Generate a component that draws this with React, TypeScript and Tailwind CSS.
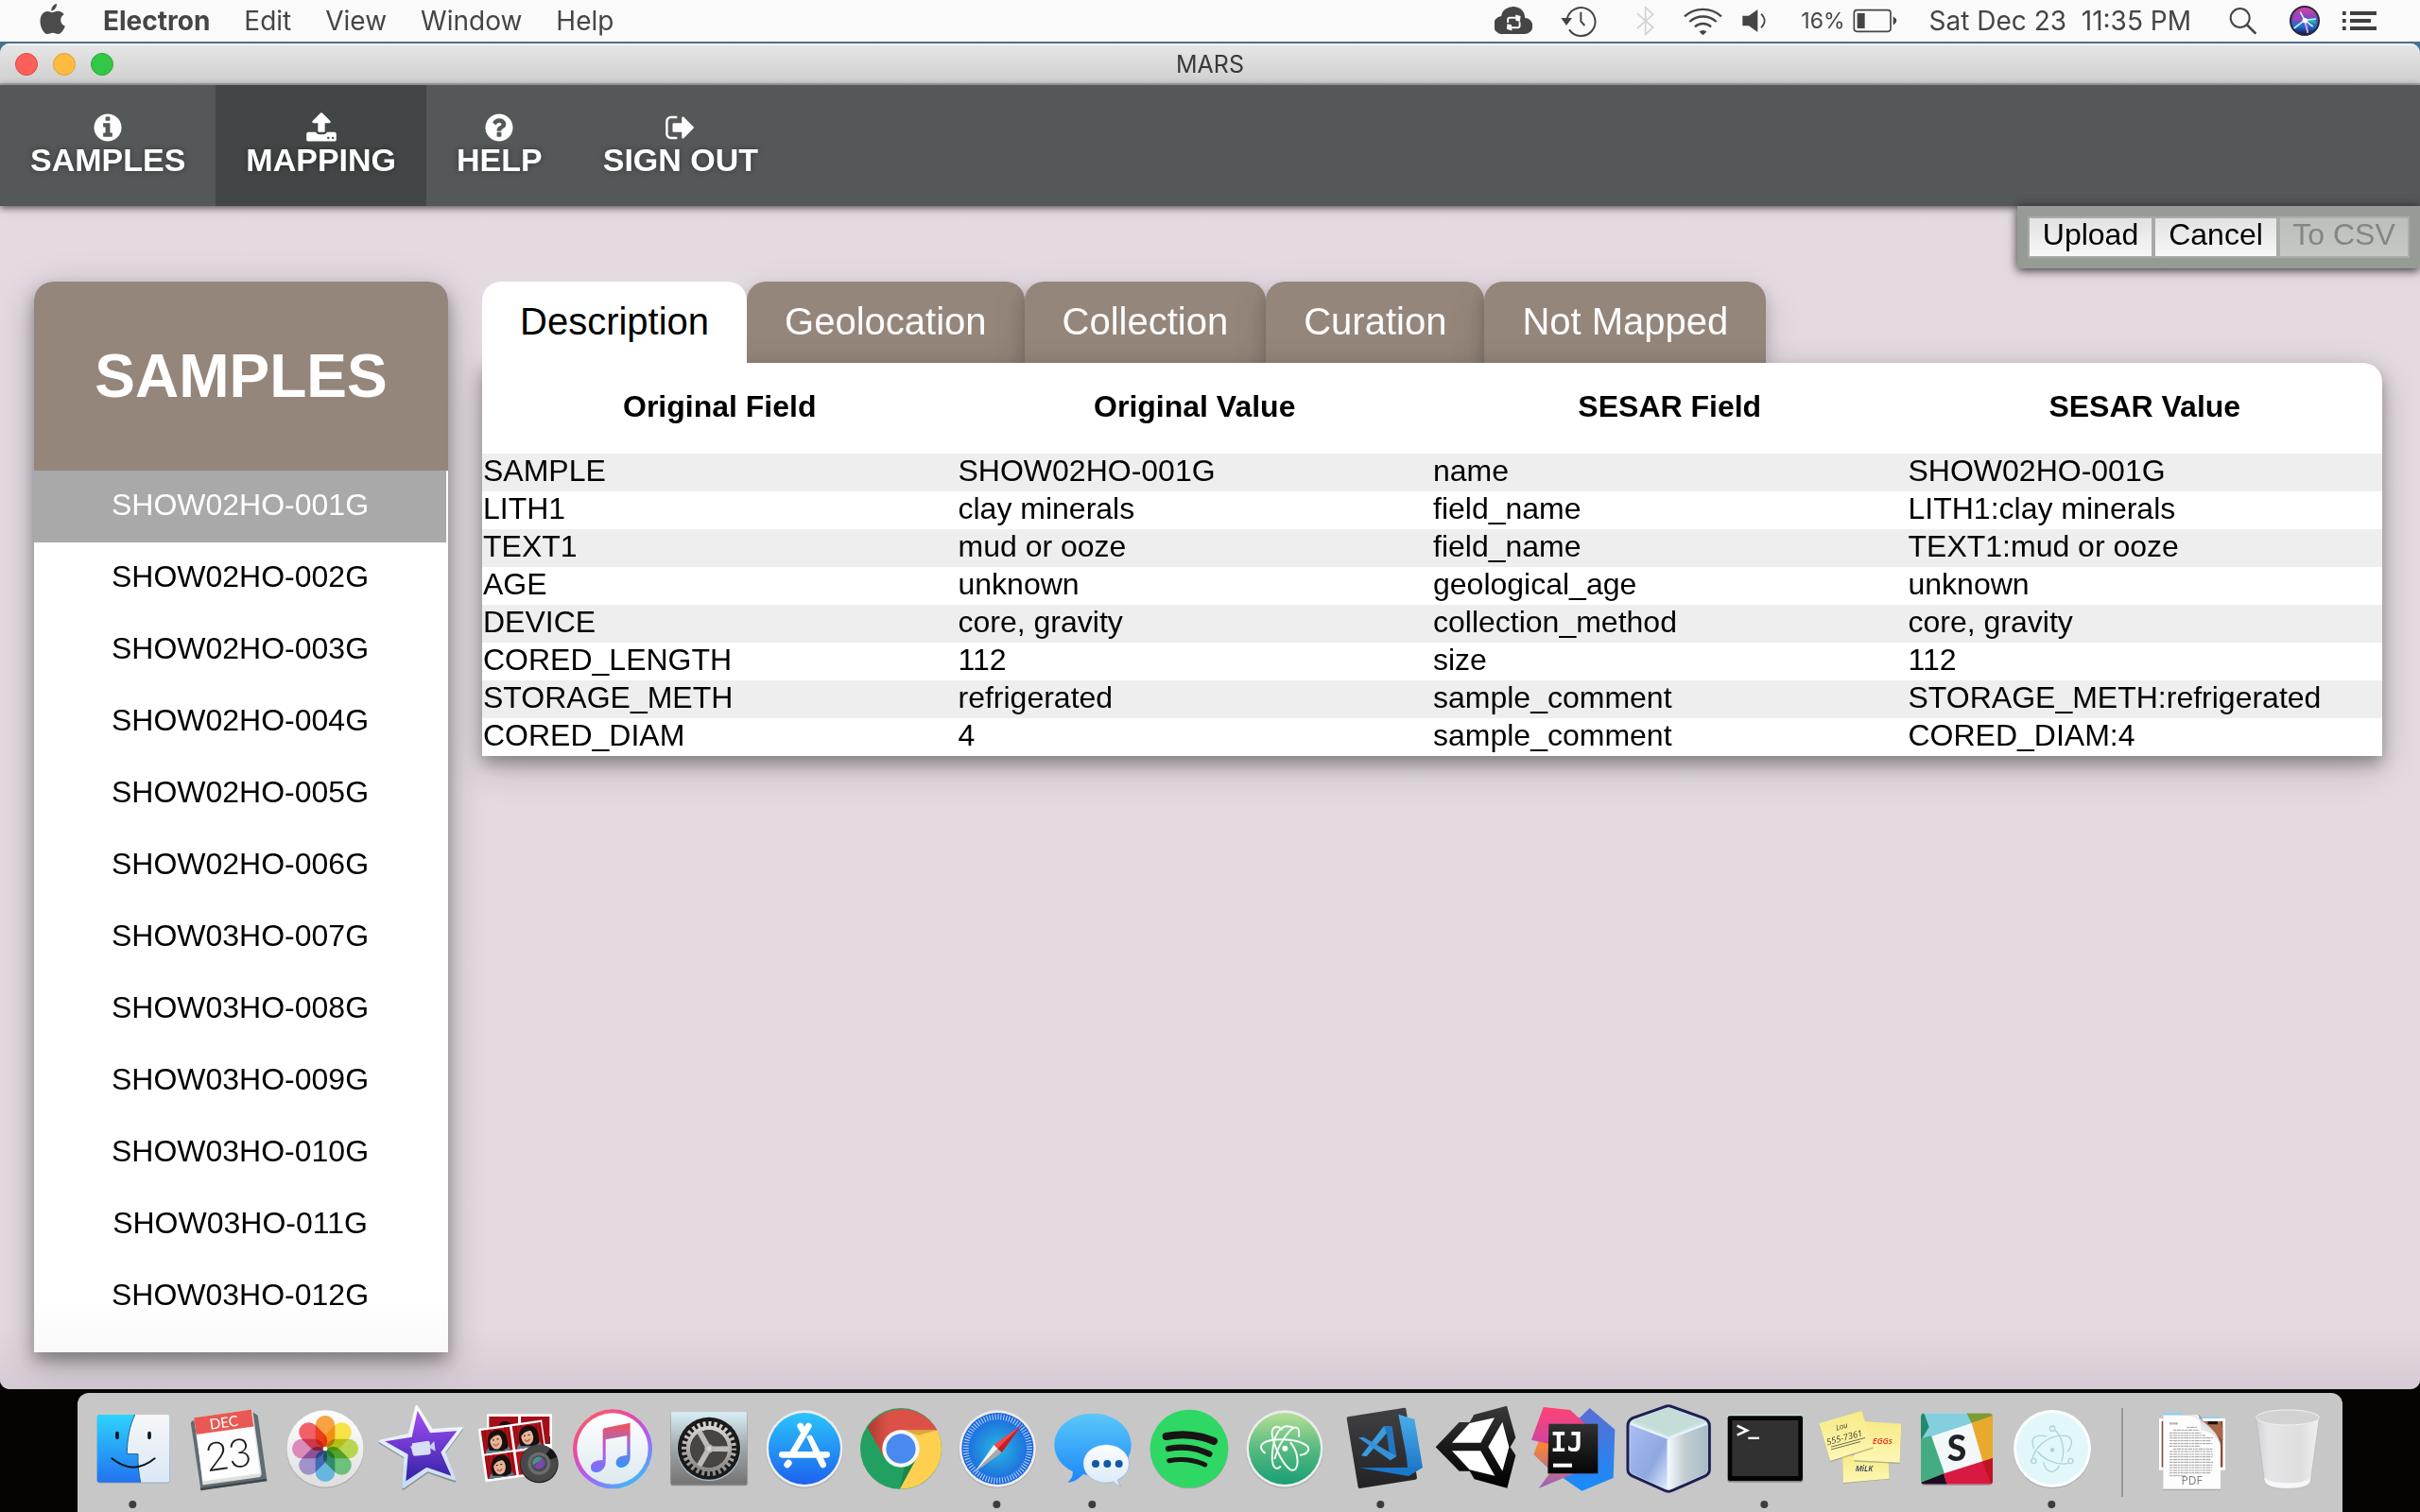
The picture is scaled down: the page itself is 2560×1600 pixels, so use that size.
import { useState, type ReactNode } from "react";

const samples = [
  "SHOW02HO-001G",
  "SHOW02HO-002G",
  "SHOW02HO-003G",
  "SHOW02HO-004G",
  "SHOW02HO-005G",
  "SHOW02HO-006G",
  "SHOW03HO-007G",
  "SHOW03HO-008G",
  "SHOW03HO-009G",
  "SHOW03HO-010G",
  "SHOW03HO-011G",
  "SHOW03HO-012G",
];

const tabs = ["Description", "Geolocation", "Collection", "Curation", "Not Mapped"];

const columns = ["Original Field", "Original Value", "SESAR Field", "SESAR Value"];

const rows = [
  ["SAMPLE", "SHOW02HO-001G", "name", "SHOW02HO-001G"],
  ["LITH1", "clay minerals", "field_name", "LITH1:clay minerals"],
  ["TEXT1", "mud or ooze", "field_name", "TEXT1:mud or ooze"],
  ["AGE", "unknown", "geological_age", "unknown"],
  ["DEVICE", "core, gravity", "collection_method", "core, gravity"],
  ["CORED_LENGTH", "112", "size", "112"],
  ["STORAGE_METH", "refrigerated", "sample_comment", "STORAGE_METH:refrigerated"],
  ["CORED_DIAM", "4", "sample_comment", "CORED_DIAM:4"],
];

const infoPath =
  "M1152 1376v-160q0-14-9-23t-23-9h-96V672q0-14-9-23t-23-9H672q-14 0-23 9t-9 23v160q0 14 9 23t23 9h96v320h-96q-14 0-23 9t-9 23v160q0 14 9 23t23 9h448q14 0 23-9t9-23zm-128-896V320q0-14-9-23t-23-9H800q-14 0-23 9t-9 23v160q0 14 9 23t23 9h192q14 0 23-9t9-23zm640 416q0 209-103 385.5T1281.5 1561 896 1664t-385.5-103T231 1281.5 128 896t103-385.5T510.5 231 896 128t385.5 103T1561 510.5 1664 896z";
const uploadPath =
  "M1344 1472q0-26-19-45t-45-19-45 19-19 45 19 45 45 19 45-19 19-45zm256 0q0-26-19-45t-45-19-45 19-19 45 19 45 45 19 45-19 19-45zm128-224v320q0 40-28 68t-68 28H160q-40 0-68-28t-28-68v-320q0-40 28-68t68-28h427q21 56 70.5 92t110.5 36h256q61 0 110.5-36t70.5-92h427q40 0 68 28t28 68zm-325-648q-17 40-59 40h-256v448q0 26-19 45t-45 19H768q-26 0-45-19t-19-45V640H448q-42 0-59-40-17-39 14-69l448-448q18-19 45-19t45 19l448 448q31 30 14 69z";
const helpPath =
  "M1024 1376v-192q0-14-9-23t-23-9H800q-14 0-23 9t-9 23v192q0 14 9 23t23 9h192q14 0 23-9t9-23zm256-672q0-88-55.5-163T1086 425t-170-41q-243 0-371 213-15 24 8 42l132 100q7 6 19 6 16 0 25-12 53-68 86-92 34-24 86-24 48 0 85.5 26t37.5 59q0 38-20 61t-68 45q-63 28-115.5 86.5T768 1020v36q0 14 9 23t23 9h192q14 0 23-9t9-23q0-19 21.5-49.5T1100 957q32-18 49-28.5t46-35 44.5-48 28-60.5 12.5-81zm384 192q0 209-103 385.5T1281.5 1561 896 1664t-385.5-103T231 1281.5 128 896t103-385.5T510.5 231 896 128t385.5 103T1561 510.5 1664 896z";
const signOutPath =
  "M704 1440q0 4 1 20t.5 26.5-3 23.5-10 19.5-20.5 6.5H352q-119 0-203.5-84.5T64 1248V544q0-119 84.5-203.5T352 256h320q13 0 22.5 9.5T704 288q0 4 1 20t.5 26.5-3 23.5-10 19.5T672 384H352q-66 0-113 47t-47 113v704q0 66 47 113t113 47h312l11.5 1 11.5 3 8 5.5 7 9 2 13.5zm928-544q0 26-19 45l-544 544q-19 19-45 19t-45-19-19-45v-288H512q-26 0-45-19t-19-45V704q0-26 19-45t45-19h448V352q0-26 19-45t45-19 45 19l544 544q19 19 19 45z";

const navItems = [
  { label: "SAMPLES", path: infoPath },
  { label: "MAPPING", path: uploadPath },
  { label: "HELP", path: helpPath },
  { label: "SIGN OUT", path: signOutPath },
];

function MenuBar() {
  return (
    <header className="flex h-11 shrink-0 items-center bg-[#fafafa] pr-[46px] pl-[42px] font-['Inter',sans-serif] text-[28px] leading-8 text-[#454545]">
      <button aria-label="Apple menu" className="mr-10">
        <svg className="mb-1 h-8 w-[27px]" viewBox="0 0 27 32" fill="#4b4b4b">
          <path d="M18 0c.3 3.800-2.600 7.300-5.700 7.400C11.900 4 15 .4 18 0z" />
          <path d="M13.400 9.300c1.300 0 3.300-1.500 6-1.500 2.400 0 4.900 1.300 6.300 3.500-5 3-4.500 10 1.100 12.500C25.500 27.500 22.700 32 19.500 32c-2.300 0-3.100-1.300-5.700-1.300S10.200 32 8 32C4.300 32 .5 24.700.5 18.500.5 12 4.300 8 8.200 8c2.400 0 4 1.300 5.200 1.300z" />
        </svg>
      </button>
      <nav className="flex gap-9" aria-label="Menu bar">
        <button className="font-bold">Electron</button>
        <button>Edit</button>
        <button>View</button>
        <button>Window</button>
        <button>Help</button>
      </nav>
      <div className="ml-auto flex items-center">
        <svg className="h-8 w-10" viewBox="40 14 122 96">
          <path d="M66 105a24 26 0 0 1-4-58 36 32 0 0 1 76 6 25 26 0 0 1 0 52z" fill="#454545" />
          <g fill="none" stroke="#fafafa" strokeWidth="6">
            <path d="M83 68V58q0-6 6-6h24M121 66v12q0 6-6 6H91" />
          </g>
          <path d="M108 42l16 5-2 18-14-4zM96 94l-17-5 2-17 14 3z" fill="#fafafa" />
        </svg>
        <svg className="ml-[30px] h-9 w-[38px]" viewBox="252 12 114 108" fill="none" stroke="#454545" strokeWidth="6">
          <path d="M272 62a45 45 0 1 1 7 32" />
          <path d="M316 38v30l12 13" />
          <path d="M253 57h35l-18 24z" fill="#454545" stroke="none" />
        </svg>
        <svg className="ml-[42px] h-8 w-5" viewBox="490 20 60 96" fill="none" stroke="#d2d2d2" strokeWidth="5">
          <path d="M493 45l50 44-24 22V26l24 22-50 44" />
        </svg>
        <svg className="ml-[30px] h-8 w-[41px]" viewBox="637 14 124 96" fill="none" stroke="#454545" strokeWidth="7">
          <path d="M640 48a88 88 0 0 1 118 0M656 65a64 64 0 0 1 86 0M673 81a39 39 0 0 1 52 0" />
          <path d="M687 97a17 17 0 0 1 24 0l-12 11z" fill="#454545" stroke="none" />
        </svg>
        <svg className="ml-[21px] h-8 w-[26px]" viewBox="821 18 78 96">
          <path d="M822 50h20l28-20v72l-28-20h-20z" fill="#454545" />
          <path d="M881 44q22 22 0 44" fill="none" stroke="#454545" strokeWidth="5" />
        </svg>
        <span className="ml-9 text-[23px]">16%</span>
        <svg className="ml-2 h-8 w-[47px]" viewBox="1168 18 141 96">
          <rect x="1172" y="32" width="116" height="68" rx="9" fill="none" stroke="#454545" strokeWidth="5" />
          <rect x="1182" y="42" width="24" height="48" fill="#454545" />
          <path d="M1296 52q22 14 0 28z" fill="#454545" />
        </svg>
        <span className="ml-[34px] whitespace-pre">Sat Dec 23  11:35 PM</span>
        <button aria-label="Search" className="ml-10">
          <svg className="h-8 w-[30px]" viewBox="743 18 90 96" fill="none" stroke="#454545" strokeWidth="6">
            <circle cx="778" cy="57" r="30" />
            <path d="M799 78l29 29" strokeWidth="8" />
          </svg>
        </button>
        <button aria-label="Siri" className="ml-[34px]">
          <svg className="h-8 w-8" viewBox="0 0 96 96">
            <defs>
              <linearGradient id="siri" x1="0" y1="0" x2="0" y2="1">
                <stop offset="0" stopColor="#e83a9f" />
                <stop offset=".45" stopColor="#6b4fc0" />
                <stop offset=".7" stopColor="#1f6fd0" />
                <stop offset="1" stopColor="#151040" />
              </linearGradient>
            </defs>
            <circle cx="48" cy="48" r="45" fill="url(#siri)" stroke="#1d2b38" strokeWidth="6" />
            <path d="M48 48L84 40 82 58z" fill="#1fb3a0" />
            <path d="M48 48L14 30 12 48z" fill="#b03ac0" />
            <path d="M14 72L48 46 84 42M48 46l10 40M48 46L34 20M48 46l26 20" fill="none" stroke="#b8f4ff" strokeWidth="5" />
            <path d="M50 50l8 36" stroke="#ff8ad8" strokeWidth="5" />
            <circle cx="49" cy="47" r="8" fill="#fff" />
          </svg>
        </button>
        <button aria-label="Notification Center" className="ml-6">
          <svg className="h-8 w-9" viewBox="1104 18 108 96" fill="#3f3f3f">
            <path d="M1104 36h11v12h-11zM1128 36h84v12h-84zM1104 60h11v12h-11zM1128 60h66v12h-66zM1104 84h11v12h-11zM1128 84h84v12h-84z" />
          </svg>
        </button>
      </div>
    </header>
  );
}

function TitleBar() {
  return (
    <div className="grid h-11 shrink-0 grid-cols-[1fr_auto_1fr] items-center border-t-2 border-b-2 border-t-[#f3f3f3] border-b-[#aeacae] bg-linear-to-b from-[#e6e6e6] to-[#cfcfcf] px-4">
      <div className="flex gap-4">
        <button aria-label="Close" className="size-6 rounded-full border border-[#e0443e] bg-[#fc605b]" />
        <button aria-label="Minimize" className="size-6 rounded-full border border-[#dea033] bg-[#fdbc40]" />
        <button aria-label="Zoom" className="size-6 rounded-full border border-[#27a833] bg-[#33c748]" />
      </div>
      <h1 className="font-['Inter',sans-serif] text-[25px] leading-8 text-[#3a3a3a]">MARS</h1>
    </div>
  );
}

function MainNav() {
  return (
    <nav className="relative flex h-32 shrink-0 bg-[#545858] font-bold text-white shadow-[0_2px_8px_rgba(0,0,0,0.65)]" aria-label="Main">
      {navItems.map((item) => (
        <a
          key={item.label}
          href="#"
          aria-current={item.label === "MAPPING" ? "page" : undefined}
          className={`flex flex-col items-center px-8 pt-7 text-[34px] leading-[34px] [text-shadow:0_0_6px_rgba(0,0,0,0.4)] ${
            item.label === "MAPPING" ? "bg-[#434646]" : ""
          }`}
        >
          <svg className="size-[34px]" viewBox="0 0 1792 1792" fill="currentColor" aria-hidden="true">
            <path d={item.path} />
          </svg>
          {item.label}
        </a>
      ))}
    </nav>
  );
}

function Toolbar() {
  const base = "h-11 border-2 pb-1.5 text-[32px] leading-8";
  const active = "border-[#a9aaa8] bg-linear-to-b from-[#e2e2e2] to-[#f7f7f7] text-black";
  return (
    <div className="relative flex h-[66px] self-end bg-[#969b95] p-[11px] shadow-[0_2px_10px_rgba(0,0,0,0.8)]">
      <button className={`${base} ${active} w-[133px]`}>Upload</button>
      <button className={`${base} ${active} w-[132px]`}>Cancel</button>
      <button disabled className={`${base} w-[139px] border-[#a9aeaa] bg-linear-to-b from-[#bdbfbd] to-[#c6c8c6] text-[#858585]`}>
        To CSV
      </button>
    </div>
  );
}

function Sidebar() {
  const [selected, setSelected] = useState(samples[0]);
  return (
    <aside className="flex w-[438px] shrink-0 flex-col rounded-t-[20px] bg-white bg-linear-to-b from-white from-95% to-[#f9f9f9] shadow-[0_8px_16px_rgba(0,0,0,0.3),0_12px_40px_rgba(0,0,0,0.25)]">
      <h2 className="flex h-[200px] items-center justify-center rounded-t-[20px] bg-[#95867b] text-[64px] font-bold text-white">
        SAMPLES
      </h2>
      <ul className="pr-[2px]">
        {samples.map((name) => (
          <li key={name}>
            <button
              onClick={() => setSelected(name)}
              className={`h-[76px] w-full pb-1 text-[32px] ${name === selected ? "bg-[#a9a9a9] text-white" : "text-black"}`}
            >
              {name}
            </button>
          </li>
        ))}
      </ul>
    </aside>
  );
}

function MappingPanel() {
  const [tab, setTab] = useState(tabs[0]);
  return (
    <section className="min-w-0 flex-1">
      <div className="flex" role="tablist">
        {tabs.map((name) => (
          <button
            key={name}
            role="tab"
            aria-selected={name === tab}
            onClick={() => setTab(name)}
            className={`h-[86px] rounded-t-[20px] px-10 pb-[2px] text-[40px] ${
              name === tab
                ? "relative z-10 bg-white text-black"
                : "bg-[#95867b] text-white shadow-[0_8px_16px_rgba(0,0,0,0.2),0_12px_40px_rgba(0,0,0,0.12)]"
            }`}
          >
            {name}
          </button>
        ))}
      </div>
      <div className="relative rounded-tr-[20px] bg-white shadow-[0_8px_16px_rgba(0,0,0,0.3),0_12px_40px_rgba(0,0,0,0.2)]">
        <table className="w-full table-fixed text-[32px] leading-9">
          <thead>
            <tr className="h-24">
              {columns.map((c) => (
                <th key={c} scope="col" className="px-0 pt-0 pb-1 font-bold">
                  {c}
                </th>
              ))}
            </tr>
          </thead>
          <tbody>
            {rows.map((r) => (
              <tr key={r[0]} className="h-10 odd:bg-[#eeeeee]">
                {r.map((cell, i) => (
                  <td key={i} className="px-px pt-0 pb-1 whitespace-nowrap">
                    {cell}
                  </td>
                ))}
              </tr>
            ))}
          </tbody>
        </table>
      </div>
    </section>
  );
}

type DockAppProps = { name: string; center: number; running?: boolean; children: ReactNode };

/* Every dock drawing shares one 3x grid; center is the icon's middle on it. */
function DockApp({ name, center, running, children }: DockAppProps) {
  return (
    <button aria-label={name} className="flex min-w-0 flex-1 justify-center">
      <svg className="h-[120px] w-[100px] shrink-0" viewBox={`${center - 150} 60 300 360`}>
        {children}
        {running && <circle cx={center - 2} cy="396" r="12" fill="#3d3d3d" />}
      </svg>
    </button>
  );
}

function Gradient({ id, from, to, mid }: { id: string; from: string; to: string; mid?: string }) {
  return (
    <linearGradient id={id} x1="0" y1="0" x2="0" y2="1">
      <stop offset="0" stopColor={from} />
      {mid && <stop offset=".5" stopColor={mid} />}
      <stop offset="1" stopColor={to} />
    </linearGradient>
  );
}

function Portrait({ x, y }: { x: number; y: number }) {
  return (
    <g transform={`translate(${x} ${y})`}>
      <rect x="-46" y="-38" width="92" height="74" fill="#b5121b" />
      <path d="M-34-38v74M-18-38v20M30-38v74M40-38v74M-42-38v74" stroke="#8d0b12" strokeWidth="4" />
      <path d="M-42 36q8-22 30-20h26q20 0 26 20z" fill="#5d7c90" />
      <path d="M-28 28C-34-4-26-34 4-34S38 4 30 28L14 34z" fill="#17100f" />
      <ellipse cx="-3" cy="2" rx="19" ry="25" fill="#e6b596" />
      <path d="M-22-2C-20-26 0-30 18-14 8-18-8-20-22-2z" fill="#17100f" />
      <path d="M-13 10q9 9 17 0-8 14-17 0z" fill="#fff" stroke="#a33" strokeWidth="2" />
      <path d="M-14-3h6M0-4h6" stroke="#2a1712" strokeWidth="3" />
    </g>
  );
}

function Dock() {
  const petals = ["#f89b33", "#f7e03a", "#b5d445", "#63bd72", "#5fb1e0", "#9b8bc8", "#d783b5", "#f0545c"];
  return (
    <footer className="mx-[82px] mt-1 flex h-[126px] shrink-0 rounded-t-xl bg-[#c7c7c7] px-2 pt-[6px]">
      <div className="flex min-w-0 flex-1">
        <DockApp name="Finder" center={183} running>
          <defs>
            <Gradient id="finderL" from="#2ed3fd" to="#2272f0" />
            <Gradient id="finderR" from="#f6f6f8" to="#dbe8f6" />
          </defs>
          <rect x="68" y="114" width="230" height="215" rx="7" fill="#9a9a9a" opacity=".6" />
          <rect x="68" y="111" width="230" height="215" rx="7" fill="url(#finderL)" />
          <path d="M188 111C170 150 164 190 163 230q0 6 5 6h30c-1 30 2 60 8 90h85q7 0 7-7V118q0-7-7-7z" fill="url(#finderR)" />
          <path d="M188 111C170 150 164 190 163 230q0 6 5 6h30c-1 30 2 60 8 90" fill="none" stroke="#1c5f9e" strokeWidth="3" />
          <path d="M132 170v14M234 170v14" stroke="#101820" strokeWidth="11" strokeLinecap="round" />
          <path d="M115 250q68 56 136 0" fill="none" stroke="#101820" strokeWidth="6" strokeLinecap="round" />
        </DockApp>
        <DockApp name="Calendar" center={484}>
          <g transform="rotate(-8 484 219)">
            <path d="M376 123l4-8h196l14 12v202l-10 8H378z" fill="#5f6c73" />
            <path d="M376 330h214v8H378z" fill="#3e474c" />
            <path d="M392 112h184v202l-6 8H386z" fill="#dededc" />
            <rect x="388" y="106" width="184" height="204" fill="#fdfdfd" />
            <rect x="388" y="106" width="184" height="54" fill="#e95853" />
            <text x="480" y="151" fontSize="46" textAnchor="middle" fill="#fff" fontFamily="Lato, sans-serif">DEC</text>
            <text x="480" y="282" fontSize="126" textAnchor="middle" fill="#1c1c1c" fontWeight="300" fontFamily="Lato, sans-serif">23</text>
          </g>
        </DockApp>
        <DockApp name="Photos" center={789}>
          <defs><Gradient id="photos" from="#ffffff" to="#dedede" /></defs>
          <circle cx="789" cy="221" r="123" fill="#a5a5a5" />
          <circle cx="789" cy="219" r="122" fill="url(#photos)" />
          <g className="isolate">
            {petals.map((color, i) => (
              <rect key={color} x="758" y="114" width="62" height="102" rx="31" fill={color} fillOpacity=".93" className="mix-blend-multiply" transform={`rotate(${i * 45} 789 219)`} />
            ))}
          </g>
          <circle cx="789" cy="219" r="7" fill="#fff" />
        </DockApp>
        <DockApp name="iMovie" center={1093}>
          <defs>
            <Gradient id="imovie" from="#a44ef8" to="#3322a4" />
            <Gradient id="imovieEdge" from="#fdfdff" to="#c4dcf4" />
          </defs>
          <path d="M1080 89L1128 164 1223 158 1167 234 1200 322 1115 292 1038 346 1044 248 964 200 1057 178z" fill="#8a8f98" stroke="#8a8f98" strokeWidth="8" strokeLinejoin="round" />
          <path d="M1080 85L1128 160 1223 154 1167 230 1200 316 1115 287 1038 341 1044 244 964 195 1057 174z" fill="url(#imovieEdge)" stroke="url(#imovieEdge)" strokeWidth="8" strokeLinejoin="round" />
          <path d="M1083 98L1123 169 1208 163 1157 230 1190 305 1112 278 1046 322 1053 237 980 196 1065 182z" fill="url(#imovie)" />
          <path d="M1066 202l50-8q6 0 6 6l3 32q0 5-6 6l-44 4q-6 0-7-5l-4-17-5-10 6 2z" fill="#d8def4" />
          <path d="M1122 210l14-15 4 32-16-9z" fill="#c9cff0" />
        </DockApp>
        <DockApp name="Photo Booth" center={1400}>
          <rect x="1304" y="109" width="207" height="150" fill="#fdfdfd" />
          <rect x="1311" y="117" width="92" height="74" fill="#a50f18" />
          <rect x="1412" y="117" width="91" height="74" fill="#a50f18" />
          <path d="M1340 145q20-26 46 0z" fill="#17100f" />
          <path d="M1470 180h35v24h-30z" fill="#8c1a20" />
          <g transform="rotate(-8 1390 225)">
            <rect x="1287" y="141" width="204" height="170" fill="#fdfdfd" />
            <Portrait x={1341} y={186} />
            <Portrait x={1441} y={186} />
            <Portrait x={1341} y={267} />
            <rect x="1395" y="230" width="92" height="74" fill="#b5121b" />
          </g>
          <circle cx="1470" cy="267" r="61" fill="#222" />
          <circle cx="1470" cy="265" r="59" fill="#484848" />
          <path d="M1470 265L1506 218A59 59 0 0 1 1526 246z" fill="#151515" />
          <circle cx="1470" cy="266" r="36" fill="#6c6c6c" />
          <circle cx="1470" cy="266" r="26" fill="#474a50" />
          <path d="M1450 272a20 20 0 0 1 32-22z" fill="#4f8f90" />
          <path d="M1453 275a20 20 0 0 0 35-18l-8-8z" fill="#7a4aa8" />
        </DockApp>
        <DockApp name="iTunes" center={1947}>
          <defs>
            <linearGradient id="itRing" x1=".1" y1="0" x2=".8" y2="1">
              <stop offset="0" stopColor="#ff5e50" />
              <stop offset=".35" stopColor="#e84aa8" />
              <stop offset=".6" stopColor="#b05cf4" />
              <stop offset="1" stopColor="#2cc4fd" />
            </linearGradient>
            <Gradient id="itNote" from="#f8504e" mid="#b05ae8" to="#6c76fb" />
            <Gradient id="itNote2" from="#f8504e" mid="#9a6cdc" to="#2a97f8" />
            <Gradient id="itFace" from="#ffffff" to="#dde9ef" />
          </defs>
          <circle cx="1947" cy="220" r="126" fill="url(#itRing)" />
          <circle cx="1947" cy="219" r="113" fill="url(#itFace)" />
          <path d="M1925 154V262C1925 282 1909 294 1897 294 1885 294 1878 288 1878 278 1878 262 1892 256 1916 255V160q0-5 8-6z" fill="url(#itNote)" />
          <path d="M1920 154l83-17V246C2003 266 1988 279 1974 279 1964 279 1958 272 1958 264 1958 248 1972 241 1993 240V178l-68 12h-5z" fill="url(#itNote2)" />
        </DockApp>
        <DockApp name="System Preferences" center={477}>
          <defs>
            <Gradient id="prefs" from="#d8eef6" mid="#a0a6a9" to="#757373" />
            <Gradient id="gear" from="#d6d4d2" to="#8c8987" />
          </defs>
          <rect x="355" y="105" width="244" height="232" rx="7" fill="#8b8b8b" />
          <rect x="356" y="103" width="242" height="229" rx="7" fill="url(#prefs)" />
          <circle cx="477" cy="220" r="101" fill="#afc4d4" />
          <circle cx="477" cy="218" r="99" fill="#1b1b1b" />
          <g fill="none" stroke="url(#gear)">
            <circle cx="477" cy="219" r="79" strokeWidth="16" strokeDasharray="9 8.730" strokeDashoffset="4" />
            <circle cx="477" cy="219" r="66" strokeWidth="13" />
          </g>
          <circle cx="477" cy="219" r="59" fill="#474543" />
          <g stroke="#bdbbb9" strokeWidth="17">
            <path d="M477 219L540 220M477 219L446 164M477 219L446 273" />
          </g>
          <circle cx="477" cy="219" r="14" fill="#b5b3b1" />
          <circle cx="477" cy="219" r="8" fill="#d5d3d1" />
        </DockApp>
        <DockApp name="App Store" center={783}>
          <defs><Gradient id="store" from="#2bc4fc" to="#1d62ee" /></defs>
          <circle cx="783" cy="221" r="123" fill="#a5a5a5" />
          <circle cx="783" cy="219" r="122" fill="#ececec" />
          <circle cx="783" cy="219" r="114" fill="url(#store)" />
          <g stroke="#fff" strokeWidth="20" strokeLinecap="round" fill="none">
            <path d="M712 238H854M796 147L746 232M770 147L781 166M733 264L728 270M800 186L842 270" />
          </g>
          <path d="M789 186L806 224" stroke="#2590f6" strokeWidth="5" />
        </DockApp>
        <DockApp name="Google Chrome" center={1089}>
          <defs>
            <linearGradient id="chromeShade" x1="0" y1="0" x2="1" y2="0">
              <stop offset="0" stopColor="#a93c31" />
              <stop offset=".3" stopColor="#db5147" />
            </linearGradient>
          </defs>
          <circle cx="1089" cy="219" r="129" fill="#22a061" />
          <path d="M1089 160H1204A129 129 0 0 1 1085 347L1140 247z" fill="#ffd04f" />
          <path d="M1089 160H1204L1145 176z" fill="#e0a73a" />
          <path d="M1140 247L1085 347 1100 278z" fill="#1a8748" />
          <path d="M983 152A129 129 0 0 1 1204 160H1089L1036 247z" fill="url(#chromeShade)" />
          <circle cx="1089" cy="219" r="59" fill="#f7f7f7" />
          <circle cx="1089" cy="219" r="47" fill="#4a8af0" />
        </DockApp>
        <DockApp name="Safari" center={1394} running>
          <defs>
            <radialGradient id="safari">
              <stop offset="0" stopColor="#27b8e4" />
              <stop offset="1" stopColor="#1c62dd" />
            </radialGradient>
          </defs>
          <circle cx="1395" cy="221" r="123" fill="#a5a5a5" />
          <circle cx="1395" cy="219" r="122" fill="#ededed" />
          <circle cx="1395" cy="219" r="114" fill="url(#safari)" />
          <circle cx="1395" cy="219" r="101" fill="none" stroke="#b7d5f7" strokeWidth="18" strokeDasharray="3 5.810" />
          <path d="M1471 144L1383 207 1395 219z" fill="#fb4546" />
          <path d="M1471 144L1408 232 1395 219z" fill="#cc1b22" />
          <path d="M1321 295L1383 207 1395 219z" fill="#f4f2ee" />
          <path d="M1321 295L1408 232 1395 219z" fill="#a9aaa9" />
        </DockApp>
        <DockApp name="Messages" center={165} running>
          <defs>
            <Gradient id="msg" from="#5bc8f9" to="#1b87fb" />
            <Gradient id="msg2" from="#fafdff" to="#dbe9f8" />
          </defs>
          <path d="M165 107C233 107 287 150 287 207S233 303 170 303C158 303 144 302 134 300 120 316 104 326 85 326 98 316 103 304 101 291 66 275 43 243 43 207 43 150 97 107 165 107z" fill="url(#msg)" />
          <path d="M208 206C248 206 280 232 280 266 280 288 267 306 245 317 244 324 248 332 255 337 245 336 237 331 231 324 224 326 216 327 208 327 168 327 135 301 135 266S168 206 208 206z" fill="url(#msg2)" stroke="#3c93dd" strokeOpacity=".5" strokeWidth="2" />
          <g fill="#1358a4">
            <circle cx="174" cy="267" r="12" />
            <circle cx="211" cy="267" r="12" />
            <circle cx="248" cy="267" r="12" />
          </g>
        </DockApp>
        <DockApp name="Spotify" center={472}>
          <circle cx="472" cy="222" r="124" fill="#a3a3a3" />
          <circle cx="472" cy="219" r="124" fill="#2fd865" />
          <g fill="none" stroke="#191414" strokeLinecap="round">
            <path d="M399 180Q478 164 550 195" strokeWidth="24" />
            <path d="M406 219Q476 206 536 236" strokeWidth="19" />
            <path d="M408 257Q470 246 522 270" strokeWidth="15" />
          </g>
        </DockApp>
        <DockApp name="Atom" center={777}>
          <defs><Gradient id="atom" from="#b4e095" mid="#57ba80" to="#189f74" /></defs>
          <circle cx="777" cy="221" r="123" fill="#a3a3a3" />
          <circle cx="777" cy="219" r="122" fill="#ececec" />
          <circle cx="777" cy="219" r="114" fill="url(#atom)" />
          <g fill="none" stroke="#f4fbf5" strokeWidth="6" strokeLinecap="round">
            <path d="M714 232C690 214 700 192 760 190 820 188 858 208 852 224 848 234 838 238 827 239" />
            <path d="M763 276C748 292 734 276 738 230 744 170 764 138 800 150" />
            <path d="M768 158C752 142 732 150 738 180 746 220 774 272 796 286 824 296 826 238 796 200" />
            <path d="M822 180C826 148 810 142 790 166 770 190 752 224 746 250" />
          </g>
          <circle cx="778" cy="218" r="9" fill="#fff" />
        </DockApp>
        <DockApp name="Visual Studio Code" center={1082} running>
          <defs>
            <Gradient id="vsc" from="#49aee8" to="#1a72c4" />
            <Gradient id="vscBack" from="#404043" to="#232325" />
          </defs>
          <path d="M976 118L1156 89q5 0 5 4l35 218q0 5-5 6L1015 345q-5 0-6-4L973 124q0-5 3-6z" fill="url(#vscBack)" />
          <path d="M1137 110L1188 125 1214 279 1169 306 1162 240z" fill="url(#vsc)" />
          <path d="M1014 280L1206 278 1169 306z" fill="#1978c9" />
          <path d="M1091 147L1117 149 1036 244 1019 241z" fill="#3a9ddf" />
          <path d="M1091 147L1117 149 1131 243 1111 256 1100 172z" fill="#2277be" />
          <path d="M1010 184L1026 182 1131 243 1111 256z" fill="#3492d8" />
        </DockApp>
        <DockApp name="Unity" center={1384}>
          <defs><Gradient id="unity" from="#3a3a3a" mid="#181818" to="#000000" /></defs>
          <path d="M1254 214L1329 135H1362L1376 111 1480 83 1508 184 1491 214 1508 240 1481 344 1377 316 1362 290H1329z" fill="url(#unity)" />
          <path d="M1306 200L1362 138 1441 121 1397 200zM1306 226H1397L1442 305 1362 286zM1466 134L1487 214 1466 290 1421 213z" fill="#fff" />
        </DockApp>
        <DockApp name="IntelliJ IDEA" center={159}>
          <defs>
            <Gradient id="ijPink" from="#ff4274" to="#c845a8" />
            <Gradient id="ijBlue" from="#5a6ed2" to="#168cfc" />
            <Gradient id="ijOrange" from="#ff8a28" to="#9a5fc0" />
            <Gradient id="ijBlack" from="#303030" to="#050505" />
          </defs>
          <path d="M212 90L292 158 287 312 187 353 110 300 160 140z" fill="url(#ijBlue)" />
          <path d="M50 195L34 238 90 290 50 345 170 295 190 195z" fill="url(#ijOrange)" />
          <path d="M65 87L150 96 238 176 238 212 150 220 27 191z" fill="url(#ijPink)" />
          <path d="M82 140h156v158H79z" fill="url(#ijBlack)" />
          <text x="88" y="228" fontSize="86" fontWeight="700" fill="#fff" fontFamily="'DejaVu Sans Mono', monospace">IJ</text>
          <rect x="96" y="266" width="60" height="12" fill="#fff" />
        </DockApp>
        <DockApp name="NetBeans" center={460}>
          <defs>
            <linearGradient id="nbL" x1="0" y1="0" x2="1" y2="1">
              <stop offset="0" stopColor="#a9bdf2" />
              <stop offset=".6" stopColor="#8fa8e0" />
              <stop offset="1" stopColor="#e6efff" />
            </linearGradient>
            <linearGradient id="nbR" x1="0" y1="0" x2="1" y2="0">
              <stop offset="0" stopColor="#f2f8fb" />
              <stop offset=".4" stopColor="#c4ced3" />
              <stop offset="1" stopColor="#a9bcc6" />
            </linearGradient>
          </defs>
          <path d="M448 86Q460 80 472 86L572 122Q590 130 590 146V286Q590 298 578 305L474 351Q460 358 446 351L344 305Q331 298 331 286V146Q331 130 346 122z" fill="#cfe4e2" stroke="#1d1f55" strokeWidth="9" />
          <path d="M338 142L460 188V350L344 298Q338 294 338 284z" fill="url(#nbL)" />
          <path d="M583 142L460 188V350L578 298Q583 294 583 284z" fill="url(#nbR)" />
          <path d="M460 88L572 130 460 178 348 130z" fill="#c5ddd8" />
          <path d="M340 140L460 186 582 140" fill="none" stroke="#e4f4fc" strokeWidth="7" />
          <path d="M460 190V346" stroke="#eef6ff" strokeWidth="9" />
        </DockApp>
        <DockApp name="Terminal" center={770} running>
          <rect x="651" y="114" width="240" height="212" rx="7" fill="#8b8b8b" />
          <rect x="651" y="111" width="240" height="210" rx="7" fill="#cfe6ea" />
          <rect x="652" y="115" width="238" height="206" rx="6" fill="#050505" />
          <rect x="666" y="129" width="210" height="177" fill="#313131" />
          <path d="M682 146L713 161 682 176" fill="none" stroke="#fff" strokeWidth="8" />
          <rect x="717" y="182" width="35" height="7" fill="#fff" />
        </DockApp>
        <DockApp name="Stickies" center={1076}>
          <defs><Gradient id="note" from="#f8ea86" to="#fdf7b4" /></defs>
          <g fontFamily="'Open Sans', sans-serif" fontStyle="italic">
            <path d="M1020 245L1166 250 1168 316 1022 330z" fill="#908d6e" opacity=".6" />
            <path d="M1019 240L1165 245 1168 314 1022 327z" fill="url(#note)" />
            <text x="1060" y="290" fontSize="25" fontWeight="600" fill="#2b3a66">MiLK</text>
            <path d="M1074 135L1206 143 1201 267 1056 260z" fill="#908d6e" opacity=".6" />
            <path d="M1074 131L1206 140 1201 263 1054 255z" fill="url(#note)" />
            <text x="1114" y="204" fontSize="27" fontWeight="600" fill="#e8341f">EGGs</text>
            <path d="M946 144L1080 103 1117 218 980 262z" fill="#908d6e" opacity=".6" />
            <path d="M945 139L1080 99 1117 214 980 258z" fill="url(#note)" />
            <g transform="rotate(-15 980 210)" fill="#3f3d2c">
              <text x="1012" y="168" fontSize="24">Lou</text>
              <text x="972" y="206" fontSize="28">555-7361</text>
              <path d="M982 214h112M980 222h96" stroke="#3f3d2c" strokeWidth="2" />
            </g>
          </g>
        </DockApp>
        <DockApp name="Slack" center={1377}>
          <defs>
            <clipPath id="slackClip"><rect x="1263" y="106" width="228" height="226" rx="12" /></clipPath>
          </defs>
          <rect x="1263" y="109" width="228" height="226" rx="12" fill="#8f8f8f" />
          <g clipPath="url(#slackClip)">
            <rect x="1263" y="106" width="228" height="226" fill="#f4f7fa" />
            <path d="M1276 106H1412L1424 138 1296 180 1263 187z" fill="#84cfdd" />
            <path d="M1263 106h10l16 44-24 40h-2z" fill="#238a6a" />
            <path d="M1408 106H1491V116L1424 138z" fill="#7f9a35" />
            <path d="M1424 138L1491 114V252L1460 262z" fill="#e9a92f" />
            <path d="M1263 187L1296 178 1338 298 1263 326z" fill="#43ad81" />
            <path d="M1263 326L1336 298 1346 332H1263z" fill="#1d0b20" />
            <path d="M1336 298L1491 249V332H1345z" fill="#d81a42" />
            <path d="M1458 260L1491 249V332H1486z" fill="#c01322" />
          </g>
          <text x="1377" y="258" fontSize="112" fontWeight="900" textAnchor="middle" fill="#1d2128" fontFamily="Lato, sans-serif">S</text>
        </DockApp>
        <DockApp name="Electron" center={213} running>
          <g transform="translate(0 -90)">
            <circle cx="213" cy="312" r="123" fill="#a3a3a3" />
            <circle cx="213" cy="309" r="123" fill="#fcfefe" />
            <circle cx="213" cy="309" r="114" fill="#e2f7fa" />
            <g fill="none" stroke="#aed3d3" strokeWidth="4">
              <circle cx="213" cy="245" r="8" />
              <circle cx="154" cy="348" r="8" />
              <circle cx="271" cy="348" r="8" />
              <path d="M220 249C240 264 256 306 243 350" />
              <path d="M194 270C160 262 142 272 154 308" />
              <path d="M151 339C156 308 196 270 238 268 272 264 286 284 262 318" />
              <path d="M166 318C186 344 228 362 262 356" />
              <path d="M185 352C194 390 222 390 236 362" />
            </g>
            <circle cx="213" cy="313" r="7" fill="#aed3d3" />
          </g>
        </DockApp>
      </div>
      <div className="mx-[22px] mt-[10px] h-[94px] w-[2px] bg-[#979797]" />
      <div className="flex w-[202px]">
        <DockApp name="Document" center={657}>
          <defs>
            <linearGradient id="curl" x1="0" y1="1" x2="1" y2="0">
              <stop offset=".4" stopColor="#ffffff" />
              <stop offset="1" stopColor="#b5b5b5" />
            </linearGradient>
          </defs>
          <g transform="translate(0 -90)">
            <rect x="552" y="213" width="210" height="164" fill="#fff" />
            <rect x="560" y="222" width="194" height="146" fill="#8a4b34" />
            <path d="M686 222h60l8 30v30z" fill="#a9684a" />
            <path d="M706 222h32v10h-30z" fill="#1c1512" />
            <path d="M680 211h68" stroke="#7fd4fb" strokeWidth="4" />
            <path d="M565 440H747V300L680 202H565z" fill="#8d8d8d" opacity=".7" />
            <path d="M565 437H747V300Q744 270 684 222L676 202H565z" fill="#fdfdfd" />
            <rect x="565" y="196" width="58" height="6" fill="#7fd4fb" />
            <path d="M620 202C672 202 688 210 686 250 712 250 742 270 747 300 746 262 700 228 684 218 676 206 650 202 620 202z" fill="url(#curl)" stroke="#c4c4c4" strokeWidth="1" />
            <g stroke="#9c9c9c" strokeWidth="3" strokeDasharray="9 2 14 2 6 2">
              <path d="M640 241h32M597 250h82M585 259h100M585 267h116M585 275h138M585 284h132M585 293h136M585 301h98M597 310h124M585 318h136M585 327h138M585 335h136M585 344h130M585 352h138M585 361h136M585 369h136M585 378h134M585 386h130M585 395h50" />
            </g>
            <path d="M585 229h27" stroke="#a8a8a8" strokeWidth="7" strokeDasharray="4 1" />
            <text x="656" y="424" fontSize="36" textAnchor="middle" fill="#7d7d7d" fontFamily="'Open Sans', sans-serif">PDF</text>
          </g>
        </DockApp>
        <DockApp name="Trash" center={957}>
          <defs>
            <linearGradient id="bin" x1="0" y1="0" x2="1" y2="0">
              <stop offset="0" stopColor="#d0d1d3" />
              <stop offset=".2" stopColor="#e6e6e8" />
              <stop offset=".7" stopColor="#dededf" />
              <stop offset="1" stopColor="#f0f0f1" />
            </linearGradient>
          </defs>
          <g transform="translate(0 -90)">
            <path d="M857 212L883 412Q890 437 957 437T1030 412L1057 212z" fill="url(#bin)" stroke="#b4b5b8" strokeWidth="2" />
            <path d="M882 400Q900 418 957 418T1030 400L1028 412Q1020 434 957 434T885 412z" fill="#f6f7f8" />
            <ellipse cx="957" cy="210" rx="100" ry="24" fill="#d2d2d3" stroke="#f2f2f2" strokeWidth="3" />
          </g>
        </DockApp>
      </div>
    </footer>
  );
}

export default function App() {
  return (
    <div className="flex min-h-screen flex-col bg-[linear-gradient(#48708f_0,#48708f_80px,#050403_80px)]">
      <MenuBar />
      <div className="mt-[2px] flex flex-1 flex-col overflow-hidden rounded-[10px] bg-[#e4dae2] font-['Liberation_Sans',Arial,sans-serif]">
        <TitleBar />
        <MainNav />
        <main className="flex flex-1 flex-col bg-linear-to-b from-[#e4dae2] from-95% to-[#d6cbd4]">
          <Toolbar />
          <div className="mt-[14px] flex flex-1 gap-9 pr-10 pb-[39px] pl-9">
            <Sidebar />
            <MappingPanel />
          </div>
        </main>
      </div>
      <Dock />
    </div>
  );
}
